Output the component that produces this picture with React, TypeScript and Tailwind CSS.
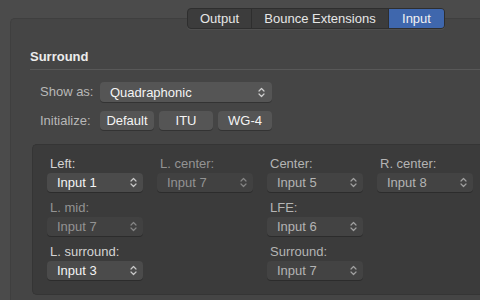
import React from "react";

const font = { fontFamily: '"Liberation Sans", Arial, sans-serif' };

function Chevron({ color }: { color: string }) {
  return (
    <svg width="7" height="11" viewBox="0 0 7 11" fill="none" stroke={color} strokeWidth="1.2" strokeLinecap="round" strokeLinejoin="round">
      <path d="M1 4 L3.5 1.5 L6 4" />
      <path d="M1 7 L3.5 9.5 L6 7" />
    </svg>
  );
}

type Level = "on" | "mid" | "off";

function Popup({ value, level }: { value: string; level: Level }) {
  const bg = level === "on" ? "bg-[#4b4b4b]" : level === "mid" ? "bg-[#434343]" : "bg-[#414141]";
  const tc = level === "on" ? "text-[#f4f4f4]" : level === "mid" ? "text-[#b4b4b4]" : "text-[#939393]";
  const cc = level === "on" ? "#c8c8c8" : level === "mid" ? "#a0a0a0" : "#858585";
  return (
    <div className={`flex h-[19px] w-[96px] items-center justify-between rounded-[4px] ${bg} pl-[10px] pr-[6px] shadow-[0_1px_0_rgba(0,0,0,0.25)]`}>
      <span className={`text-[13px] leading-none ${tc}`}>{value}</span>
      <Chevron color={cc} />
    </div>
  );
}

function Cell({ label, value, level }: { label: string; value: string; level: Level }) {
  const lc = level === "on" ? "text-[#d4d4d4]" : level === "mid" ? "text-[#b4b4b4]" : "text-[#939393]";
  return (
    <div className="flex w-[110px] shrink-0 flex-col gap-[2px]">
      <span className={`h-[15px] whitespace-nowrap pl-[3px] text-[13px] leading-[15px] ${lc}`}>{label}</span>
      <Popup value={value} level={level} />
    </div>
  );
}

function Empty() {
  return <div className="w-[110px] shrink-0" />;
}

export default function App() {
  return (
    <div className="relative h-[300px] w-[480px] overflow-hidden bg-[#4b4b4b]" style={font}>
      {/* Tabs */}
      <div className="absolute left-[187px] top-[8px] z-10 flex h-[21px] overflow-hidden rounded-[4px] border border-[#2e2e2e] bg-[#3c3c3c] text-[13px] shadow-[0_1px_0_rgba(255,255,255,0.06)]">
        <div className="flex w-[64px] items-center justify-center border-r border-[#2e2e2e] text-[#e6e6e6]">Output</div>
        <div className="flex w-[137px] items-center justify-center border-r border-[#2e2e2e] text-[#e6e6e6]">Bounce Extensions</div>
        <div className="flex w-[55px] items-center justify-center bg-[#3f67ad] text-[#f2f2f2]">Input</div>
      </div>

      {/* Panel */}
      <div className="ml-[10px] mt-[18px] h-[300px] rounded-tl-[5px] border-l border-t border-[#3f3f3f] bg-[#454545] pl-[19px] pt-[31px]">
        <div className="text-[13px] font-bold leading-[14px] text-[#ececec]">Surround</div>
        <div className="mt-[5px] h-px bg-[#585858]" />

        <div className="ml-[10px] mt-[12px] flex flex-col gap-[9px]">
          <div className="flex items-center">
            <span className="w-[60px] text-[13px] text-[#b8b8b8]">Show as:</span>
            <div className="flex h-[20px] w-[172px] items-center justify-between rounded-[4px] bg-[#555555] pl-[10px] pr-[7px] shadow-[0_1px_0_rgba(0,0,0,0.25)]">
              <span className="text-[13px] leading-none text-[#f4f4f4]">Quadraphonic</span>
              <Chevron color="#cfcfcf" />
            </div>
          </div>
          <div className="flex items-center">
            <span className="w-[60px] text-[13px] text-[#b8b8b8]">Initialize:</span>
            <div className="flex gap-[5px]">
              {["Default", "ITU", "WG-4"].map((b) => (
                <div key={b} className="flex h-[19px] w-[54px] items-center justify-center rounded-[4px] bg-[#555555] text-[13px] leading-none text-[#f4f4f4] shadow-[0_1px_0_rgba(0,0,0,0.25)]">
                  {b}
                </div>
              ))}
            </div>
          </div>
        </div>

        {/* Inner box */}
        <div className="ml-[2px] mt-[13px] h-[151px] rounded-l-[5px] border-b border-l border-t border-[#353535] bg-[#3b3b3b] pl-[14px] pt-[11px]">
          <div className="flex flex-col gap-[8px]">
            <div className="flex">
              <Cell label="Left:" value="Input 1" level="on" />
              <Cell label="L. center:" value="Input 7" level="off" />
              <Cell label="Center:" value="Input 5" level="mid" />
              <Cell label="R. center:" value="Input 8" level="mid" />
            </div>
            <div className="flex">
              <Cell label="L. mid:" value="Input 7" level="off" />
              <Empty />
              <Cell label="LFE:" value="Input 6" level="mid" />
            </div>
            <div className="flex">
              <Cell label="L. surround:" value="Input 3" level="on" />
              <Empty />
              <Cell label="Surround:" value="Input 7" level="mid" />
            </div>
          </div>
        </div>
      </div>
    </div>
  );
}
